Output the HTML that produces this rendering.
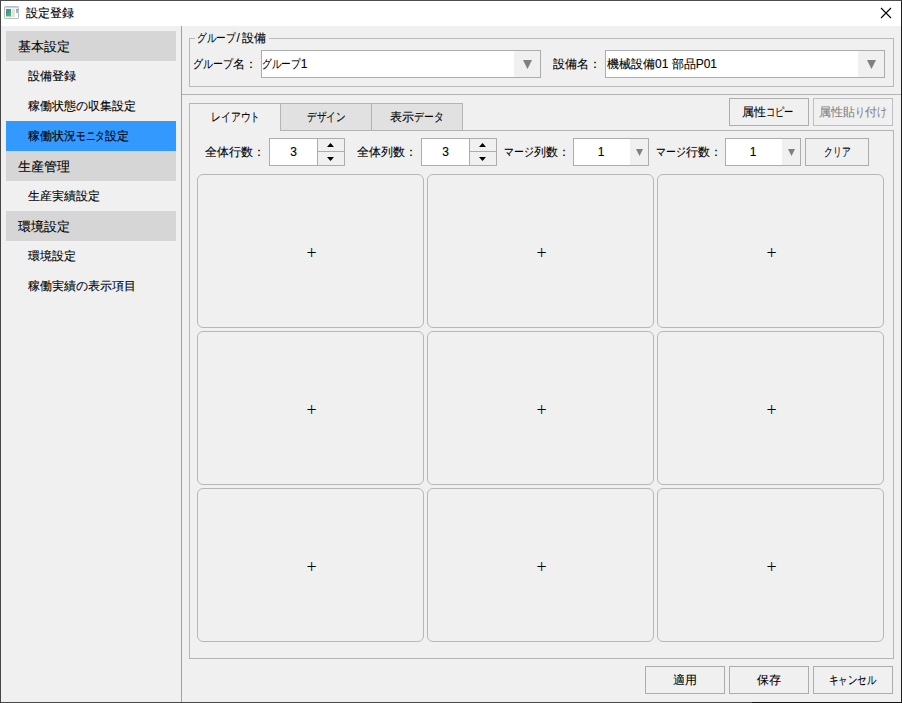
<!DOCTYPE html>
<html lang="ja">
<head>
<meta charset="utf-8">
<title>設定登録</title>
<style>
html,body{margin:0;padding:0}
body{width:902px;height:703px;overflow:hidden;position:relative;background:#f0f0f0;
  font-family:"Liberation Sans",sans-serif;font-size:12px;color:#000;-webkit-text-stroke:0.1px #000;}
div,span{box-sizing:border-box}
.a{position:absolute;white-space:nowrap}
.k{display:inline-block;--s:.8;--n:4;transform:scaleX(var(--s));transform-origin:0 50%;margin-right:calc(var(--n) * 12px * (var(--s) - 1))}
/* window chrome */
#titlebar{left:1px;top:1px;width:900px;height:25px;background:#fff}
#frame{left:0;top:0;width:902px;height:703px;border:1px solid;border-color:#4d4d4d #1e1e1e #141414 #454545;z-index:50}
#title{left:26px;top:1px;height:25px;line-height:24px;font-size:12px}
/* sidebar */
.hd{left:6px;width:170px;height:30px;line-height:32px;background:#d6d6d6;padding-left:12px;font-size:13px}
.it{left:6px;width:170px;height:30px;line-height:30px;padding-left:22px;font-size:12px}
.sel{background:#3399ff}
#vdiv{left:181px;top:26px;width:1px;height:676px;background:#a0a0a0}
#hsep{left:182px;top:94px;width:719px;height:1px;background:#b4b4b4}
/* group box */
#gb{left:189px;top:38px;width:705px;height:49px;border:1px solid #b9b9b9}
#gbl{left:195px;top:30px;height:17px;line-height:17px;padding:0 3px 0 1.5px;background:#f0f0f0}
.lb{height:28px;line-height:28px}
/* inputs */
.cb{height:28px;border:1px solid #adadad;background:#fff}
.cb .ar{position:absolute;right:0;top:0;bottom:0;background:#f0f0f0}
.cb .tx{position:absolute;left:0;top:0;bottom:0;line-height:26px}
.sv{position:absolute;left:0;top:0;display:block}
.sp{height:28px;width:76px;border:1px solid #adadad;background:#fff}
.sp .num{position:absolute;left:0;top:0;width:47px;height:26px;line-height:26px;text-align:center}
.sp .bt{position:absolute;left:47px;top:0;width:27px;height:26px;background:#f0f0f0;border-left:1px solid #adadad}
.sp .mid{position:absolute;left:47px;top:12px;width:27px;height:1px;background:#adadad}
.btn{height:28px;line-height:26px;text-align:center;border:1px solid #adadad;background:#f0f0f0}
.dis{color:#838383;-webkit-text-stroke:0.1px #838383;border-color:#bfbfbf}
/* tabs */
.tab{top:103px;width:92px;height:28px;line-height:27px;text-align:center;border:1px solid #b4b4b4;background:#e1e1e1}
.tab.on{background:#f0f0f0;border-bottom:none;z-index:3}
#pane{left:189px;top:130px;width:705px;height:529px;border:1px solid #b4b4b4}
.cell{width:227px;height:154px;border:1px solid #b7b7b7;border-radius:6px;text-align:center;font:18px/156px "Liberation Serif",serif;padding-left:2px;-webkit-text-stroke:0}
</style>
</head>
<body>
<div class="a" id="titlebar"></div>
<svg class="a" style="left:4px;top:6px" width="15" height="13" viewBox="0 0 15 13">
<defs><linearGradient id="g1" x1="0" y1="0" x2="0.4" y2="1"><stop offset="0" stop-color="#5b86c4"/><stop offset="0.5" stop-color="#3f9a8c"/><stop offset="1" stop-color="#56b85c"/></linearGradient>
<linearGradient id="g2" x1="0" y1="0" x2="0" y2="1"><stop offset="0" stop-color="#7ea2d6"/><stop offset="1" stop-color="#9fd79a"/></linearGradient></defs>
<rect x="0.5" y="0.5" width="14" height="12" rx="0.6" fill="#fff" stroke="#b9bdc5"/>
<rect x="1" y="1" width="13" height="1.3" fill="#cdd1d8"/>
<rect x="2" y="3" width="5" height="7.5" fill="url(#g1)"/>
<rect x="8" y="3" width="3" height="8" fill="#e3e3e3"/>
<rect x="12" y="3" width="2" height="4.2" fill="url(#g2)"/>
</svg>
<svg class="a" style="left:880px;top:7px" width="12" height="12" viewBox="0 0 12 12"><path d="M1 1L11 11M11 1L1 11" stroke="#000" stroke-width="1.1" fill="none"/></svg>
<div class="a" id="title">設定登録</div>

<div class="a hd" style="top:31px">基本設定</div>
<div class="a it" style="top:61px">設備登録</div>
<div class="a it" style="top:91px">稼働状態の収集設定</div>
<div class="a it sel" style="top:121px">稼働状況<span class="k" style="--n:3;--s:0.81">モニタ</span>設定</div>
<div class="a hd" style="top:151px">生産管理</div>
<div class="a it" style="top:181px">生産実績設定</div>
<div class="a hd" style="top:211px">環境設定</div>
<div class="a it" style="top:241px">環境設定</div>
<div class="a it" style="top:271px">稼働実績の表示項目</div>

<div class="a" id="vdiv"></div>
<div class="a" id="hsep"></div>

<div class="a" id="gb"></div>
<div class="a" id="gbl"><span class="k" style="--n:4;--s:0.8">グループ</span><span style="padding:0 2px 0 1.5px">/</span>設備</div>
<div class="a lb" style="left:193px;top:50px"><span class="k" style="--n:4;--s:0.83">グループ</span>名：</div>
<div class="a cb" style="left:261px;top:50px;width:280px"><div class="tx" style="left:0.3px"><span class="k" style="--n:4;--s:0.8">グループ</span>1</div><div class="ar" style="width:26px"><svg class="sv" width="26" height="26" viewBox="0 0 26 26"><polygon points="9,9 18,9 13.5,18" fill="#808080"/></svg></div></div>
<div class="a lb" style="left:553px;top:50px">設備名：</div>
<div class="a cb" style="left:605px;top:50px;width:280px"><div class="tx" style="left:1px">機械設備01 部品P01</div><div class="ar" style="width:26px"><svg class="sv" width="26" height="26" viewBox="0 0 26 26"><polygon points="9,9 18,9 13.5,18" fill="#808080"/></svg></div></div>

<div class="a" id="pane"></div>
<div class="a tab on" style="left:189px;padding-left:2px"><span class="k" style="--n:5;--s:0.82">レイアウト</span></div>
<div class="a tab" style="left:280px"><span class="k" style="--n:4;--s:0.8">デザイン</span></div>
<div class="a tab" style="left:371px">表示<span class="k" style="--n:3;--s:0.82">データ</span></div>
<div class="a btn" style="left:729px;top:98px;width:80px;padding-right:3px">属性<span class="k" style="--n:3;--s:0.77">コピー</span></div>
<div class="a btn dis" style="left:813px;top:98px;width:80px">属性貼<span class="k" style="--n:1;--s:0.83">り</span>付<span class="k" style="--n:1;--s:0.83">け</span></div>

<div class="a lb" style="left:205px;top:138px">全体行数：</div>
<div class="a sp" style="left:269px;top:138px"><div class="num">3</div><div class="bt"></div><div class="mid"></div><svg class="sv" width="74" height="26" viewBox="0 0 74 26"><polygon points="57,8 64,8 60.5,4"/><polygon points="57,18 64,18 60.5,22"/></svg></div>
<div class="a lb" style="left:357px;top:138px">全体列数：</div>
<div class="a sp" style="left:421px;top:138px"><div class="num">3</div><div class="bt"></div><div class="mid"></div><svg class="sv" width="74" height="26" viewBox="0 0 74 26"><polygon points="57,8 64,8 60.5,4"/><polygon points="57,18 64,18 60.5,22"/></svg></div>
<div class="a lb" style="left:504px;top:138px"><span class="k" style="--n:3;--s:0.82">マージ</span>列数：</div>
<div class="a cb" style="left:573px;top:138px;width:76px"><div class="tx" style="width:54px;text-align:center">1</div><div class="ar" style="width:18px"><svg class="sv" width="18" height="26" viewBox="0 0 18 26"><polygon points="6,10 13,10 9.5,17" fill="#808080"/></svg></div></div>
<div class="a lb" style="left:656px;top:138px"><span class="k" style="--n:3;--s:0.82">マージ</span>行数：</div>
<div class="a cb" style="left:725px;top:138px;width:76px"><div class="tx" style="width:54px;text-align:center">1</div><div class="ar" style="width:18px"><svg class="sv" width="18" height="26" viewBox="0 0 18 26"><polygon points="6,10 13,10 9.5,17" fill="#808080"/></svg></div></div>
<div class="a btn" style="left:805px;top:138px;width:64px"><span class="k" style="--n:3;--s:0.73">クリア</span></div>

<div class="a cell" style="left:197px;top:174px">+</div>
<div class="a cell" style="left:427px;top:174px">+</div>
<div class="a cell" style="left:657px;top:174px">+</div>
<div class="a cell" style="left:197px;top:331px">+</div>
<div class="a cell" style="left:427px;top:331px">+</div>
<div class="a cell" style="left:657px;top:331px">+</div>
<div class="a cell" style="left:197px;top:488px">+</div>
<div class="a cell" style="left:427px;top:488px">+</div>
<div class="a cell" style="left:657px;top:488px">+</div>

<div class="a btn" style="left:645px;top:666px;width:80px">適用</div>
<div class="a btn" style="left:729px;top:666px;width:80px">保存</div>
<div class="a btn" style="left:813px;top:666px;width:80px;padding-right:1px"><span class="k" style="--n:5;--s:0.785">キャンセル</span></div>

<div class="a" id="frame"></div>
<div class="a" style="left:1px;top:702px;width:751px;height:1px;background:#484848;z-index:51"></div>
</body>
</html>
